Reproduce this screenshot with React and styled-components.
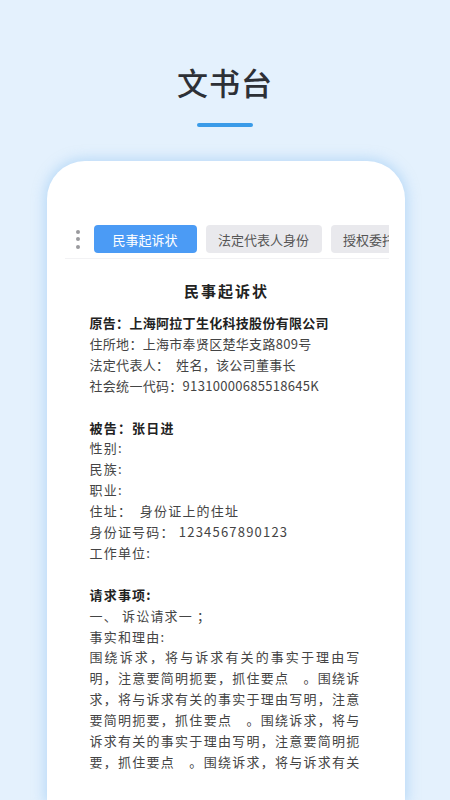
import React from 'react';
import styled, { createGlobalStyle } from 'styled-components';

const GlobalStyle = createGlobalStyle`
    * { box-sizing: border-box; }
    body {
        margin: 0;
        font-family: "Noto Sans CJK SC", "Noto Sans", sans-serif;
        background: #e4f1fd;
    }
`;

const tabs = ['民事起诉状', '法定代表人身份', '授权委托书（公民）', '财产保全申请书'];

const plaintiff = [
    { text: '原告：上海阿拉丁生化科技股份有限公司', bold: true },
    { text: '住所地：上海市奉贤区楚华支路809号' },
    { text: '法定代表人：　姓名，该公司董事长' },
    { text: '社会统一代码：91310000685518645K' },
];

const defendant = [
    { text: '被告：张日进', bold: true },
    { text: '性别:' },
    { text: '民族:' },
    { text: '职业:' },
    { text: '住址：　身份证上的住址' },
    { text: '身份证号码： 1234567890123' },
    { text: '工作单位:' },
];

const claims = [
    { text: '请求事项:', bold: true },
    { text: '一、 诉讼请求一 ；' },
    { text: '事实和理由:' },
];

const reason = '围绕诉求，将与诉求有关的事实于理由写明，注意要简明扼要，抓住要点　。';

const Page = styled.div`
    height: 800px;
    overflow: hidden;
    padding-top: 62px;
    display: flex;
    flex-direction: column;
    align-items: center;
`;

const Title = styled.h1`
    margin: 0;
    font-size: 31px;
    line-height: 40px;
    font-weight: 500;
    letter-spacing: 1px;
    color: #2d3036;
`;

const Underline = styled.div`
    width: 56px;
    height: 4px;
    border-radius: 2px;
    background: #3a9be8;
    margin-top: 21px;
`;

const Card = styled.div`
    width: 358px;
    flex: 1;
    margin-top: 34px;
    margin-left: 1px;
    background: #fff;
    border-radius: 38px 38px 0 0;
    box-shadow: 0 0 12px 3px rgba(150, 200, 245, 0.5);
    padding: 64px 16px 0 18px;
`;

const TabBar = styled.div`
    display: flex;
    align-items: center;
    height: 28px;
    overflow: hidden;
`;

const Dots = styled.div`
    flex: none;
    width: 29px;
    padding-left: 11px;
    display: flex;
    flex-direction: column;
    gap: 3.5px;
`;

const Dot = styled.span`
    width: 4px;
    height: 4px;
    border-radius: 50%;
    background: #9a9a9e;
`;

const Tabs = styled.div`
    display: flex;
    gap: 9px;
`;

const Tab = styled.div`
    flex: none;
    min-width: 103px;
    height: 28px;
    padding: 0 12.5px;
    border-radius: 4px;
    display: flex;
    align-items: center;
    justify-content: center;
    font-size: 13px;
    white-space: nowrap;
    background: ${p => (p.$active ? '#4b9bf5' : '#e9e9ed')};
    color: ${p => (p.$active ? '#fff' : '#555')};
`;

const Divider = styled.div`
    height: 1px;
    background: #f2f2f4;
    margin-top: 5px;
`;

const Document = styled.div`
    height: 495px;
    overflow: hidden;
    margin-top: 20px;
    padding-left: 25px;
`;

const DocTitle = styled.h2`
    margin: 0 0 10px;
    padding-right: 25px;
    text-align: center;
    font-size: 15px;
    line-height: 24px;
    font-weight: 700;
    letter-spacing: 2px;
    color: #222;
`;

const Section = styled.div`
    width: 271px;
    margin-bottom: 20.9px;
    letter-spacing: ${p => p.$spacing}px;
`;

const Line = styled.div`
    font-size: 13px;
    line-height: 20.9px;
    white-space: pre;
    font-weight: ${p => (p.$bold ? 700 : 400)};
    color: ${p => (p.$bold ? '#222' : '#444')};
`;

const Paragraph = styled.p`
    margin: 0;
    font-size: 13px;
    line-height: 20.9px;
    text-align: justify;
    color: #444;
`;

const Lines = ({ rows }) =>
    rows.map((row, index) => (
        <Line key={`line-${index}`} $bold={row.bold}>{row.text}</Line>
    ));

export default function App() {
    return (
        <Page>
            <GlobalStyle />
            <Title>文书台</Title>
            <Underline />
            <Card>
                <TabBar>
                    <Dots>
                        <Dot />
                        <Dot />
                        <Dot />
                    </Dots>
                    <Tabs>
                        {tabs.map((tab, index) => (
                            <Tab key={tab} $active={index === 0}>{tab}</Tab>
                        ))}
                    </Tabs>
                </TabBar>
                <Divider />
                <Document>
                    <DocTitle>民事起诉状</DocTitle>
                    <Section $spacing={0.3}>
                        <Lines rows={plaintiff} />
                    </Section>
                    <Section $spacing={1.2}>
                        <Lines rows={defendant} />
                    </Section>
                    <Section $spacing={1.2}>
                        <Lines rows={claims} />
                        <Paragraph>{reason.repeat(5)}</Paragraph>
                    </Section>
                </Document>
            </Card>
        </Page>
    );
}
